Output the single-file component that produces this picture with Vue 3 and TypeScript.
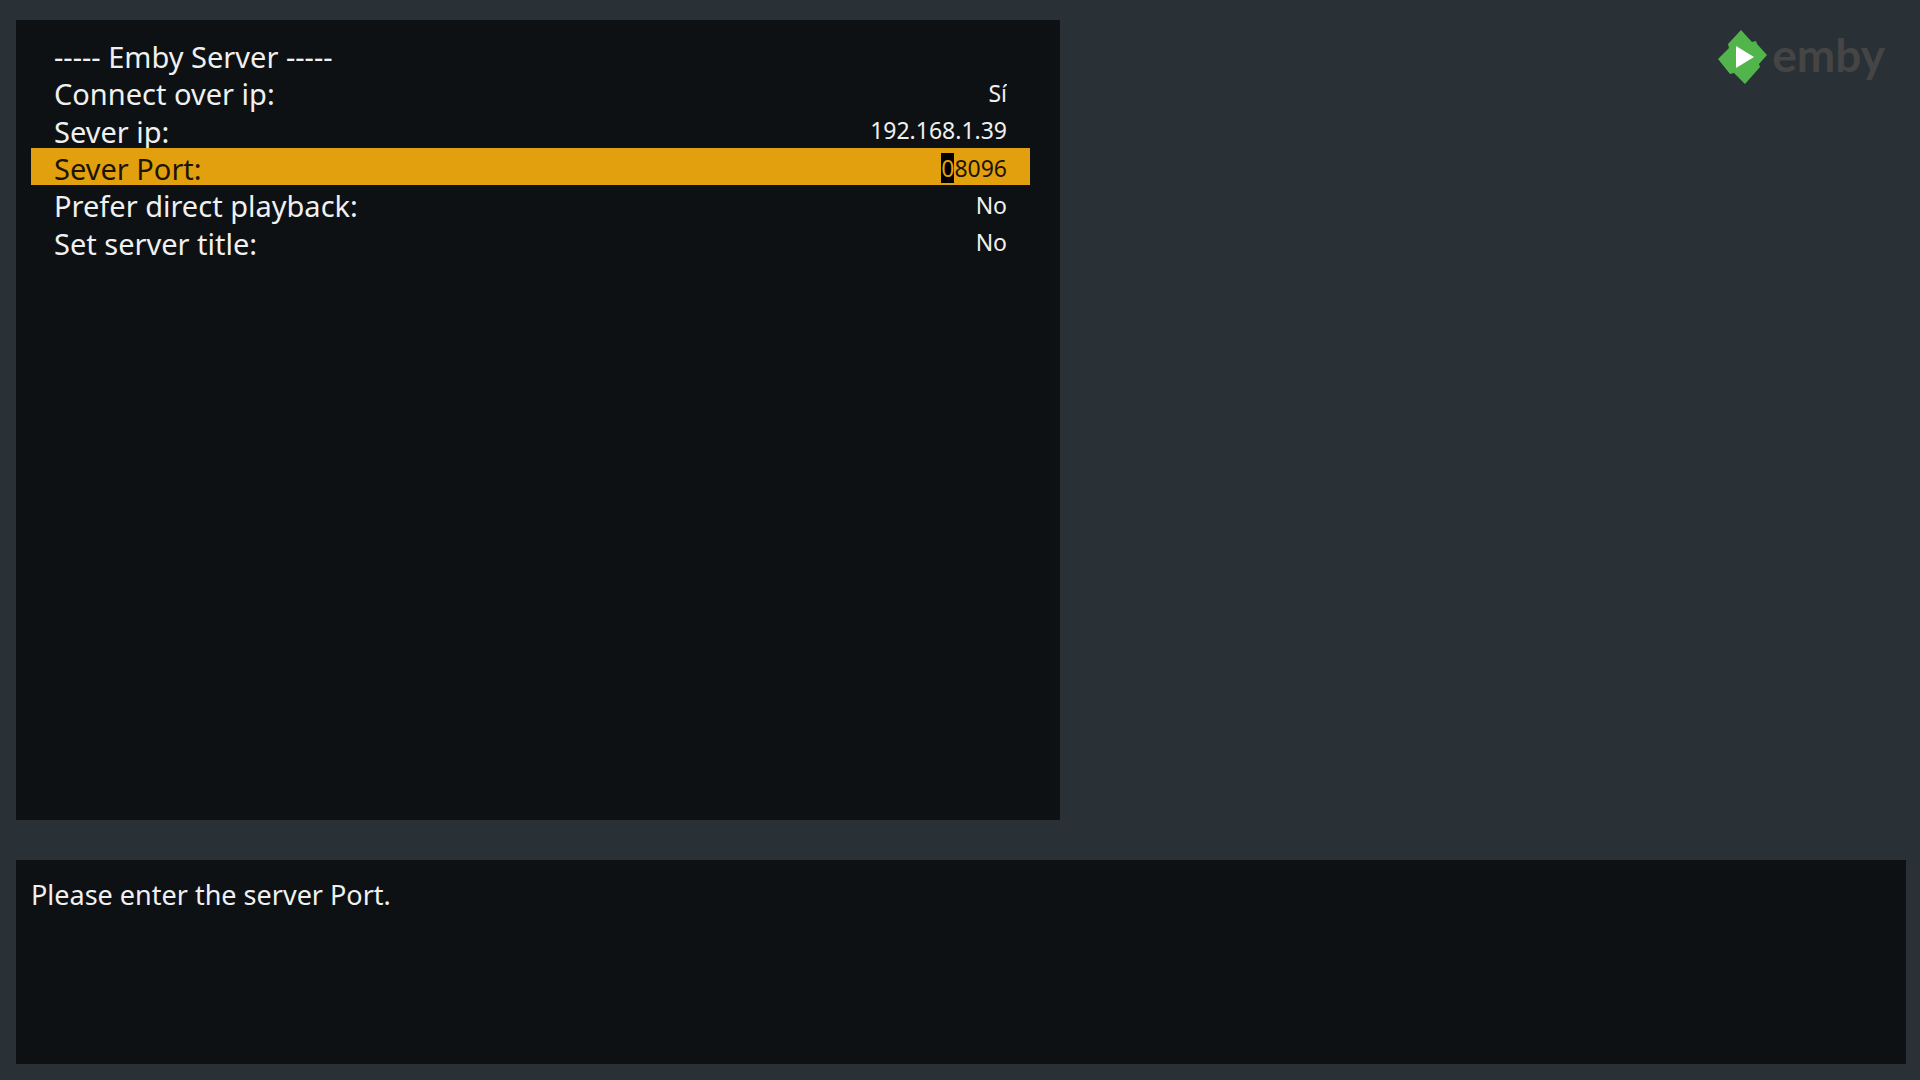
<script setup lang="ts">
import { onMounted, ref } from 'vue'

const connectOverIp = ref<string>('Sí')
const serverIp = ref<string>('192.168.1.39')
const serverPort = ref<string>('08096')
const directPlayback = ref<string>('No')
const serverTitle = ref<string>('No')
const portInput = ref<HTMLInputElement | null>(null)

onMounted(() => {
  // The digit being edited is shown as a selected character
  portInput.value?.focus()
  portInput.value?.setSelectionRange(0, 1)
})
</script>

<template>
  <main class="screen">
    <div class="top">
      <form class="panel settings" @submit.prevent>
        <div class="rows">
          <div class="row">
            <h1 class="label">----- Emby Server -----</h1>
          </div>
          <div class="row">
            <label class="label" for="connect">Connect over ip:</label>
            <select id="connect" v-model="connectOverIp" class="value">
              <option>Sí</option>
              <option>No</option>
            </select>
          </div>
          <div class="row">
            <label class="label" for="ip">Sever ip:</label>
            <input id="ip" v-model="serverIp" class="value" type="text" />
          </div>
          <div class="row active">
            <label class="label" for="port">Sever Port:</label>
            <input id="port" ref="portInput" v-model="serverPort" class="value" type="text" />
          </div>
          <div class="row">
            <label class="label" for="direct">Prefer direct playback:</label>
            <select id="direct" v-model="directPlayback" class="value">
              <option>Sí</option>
              <option>No</option>
            </select>
          </div>
          <div class="row">
            <label class="label" for="title">Set server title:</label>
            <select id="title" v-model="serverTitle" class="value">
              <option>Sí</option>
              <option>No</option>
            </select>
          </div>
        </div>
      </form>
      <div class="brand">
        <svg class="mark" viewBox="0 0 50 54" aria-hidden="true">
          <path fill="#52b54b" d="M23 0 34 12 38 11 39 14 49 25 41 34 42 37 27 54 16 43 12 44 0 29 11 18 10 14Z" />
          <path fill="#fff" d="M18 16 36 27 18 38Z" />
        </svg>
        <span class="name">emby</span>
      </div>
    </div>
    <section class="panel help">
      <p class="hint">Please enter the server Port.</p>
    </section>
  </main>
</template>

<style>
body {
  background: #293036;
}
</style>

<style scoped>
.screen {
  box-sizing: border-box;
  display: flex;
  flex-direction: column;
  gap: 40px;
  min-height: 100vh;
  padding: 20px 14px 16px 16px;
  font-family: "Noto Sans", sans-serif;
  color: #f0f0f0;
}

.top {
  display: flex;
  flex: 1;
  justify-content: space-between;
}

.panel {
  box-sizing: border-box;
  background: #0d1113;
}

.settings {
  width: 55.24%;
  padding: 16px 30px 0 15px;
}

.rows {
  display: grid;
  grid-template-rows: repeat(6, 1fr);
  height: 224px;
}

.row {
  display: flex;
  align-items: center;
  justify-content: space-between;
  padding: 2px 23px 0;
}

.label {
  margin: 0;
  padding-top: 2px;
  font-size: 29px;
  font-weight: 400;
  line-height: 33px;
  white-space: pre;
}

.value {
  box-sizing: border-box;
  width: 240px;
  height: 30px;
  margin: 0;
  padding: 0;
  border: 0;
  outline: 0;
  appearance: none;
  background: transparent;
  color: inherit;
  font-family: inherit;
  font-size: 23px;
  line-height: 30px;
  text-align: right;
  text-align-last: right;
}

.active {
  background: #e3a00e;
  color: #1c1404;
}

.value::selection {
  background: #000;
  color: #e3a00e;
}

.brand {
  display: flex;
  align-items: center;
  gap: 4px;
  height: 74px;
  padding-right: 21px;
}

.mark {
  width: 50px;
  height: 54px;
}

.name {
  padding-bottom: 4px;
  color: #454545;
  font-family: Lato, sans-serif;
  font-size: 46px;
  font-weight: 700;
  line-height: 50px;
}

.help {
  height: 204px;
  padding: 16px 15px;
}

.hint {
  margin: 0;
  font-size: 27px;
  line-height: 37px;
}
</style>
